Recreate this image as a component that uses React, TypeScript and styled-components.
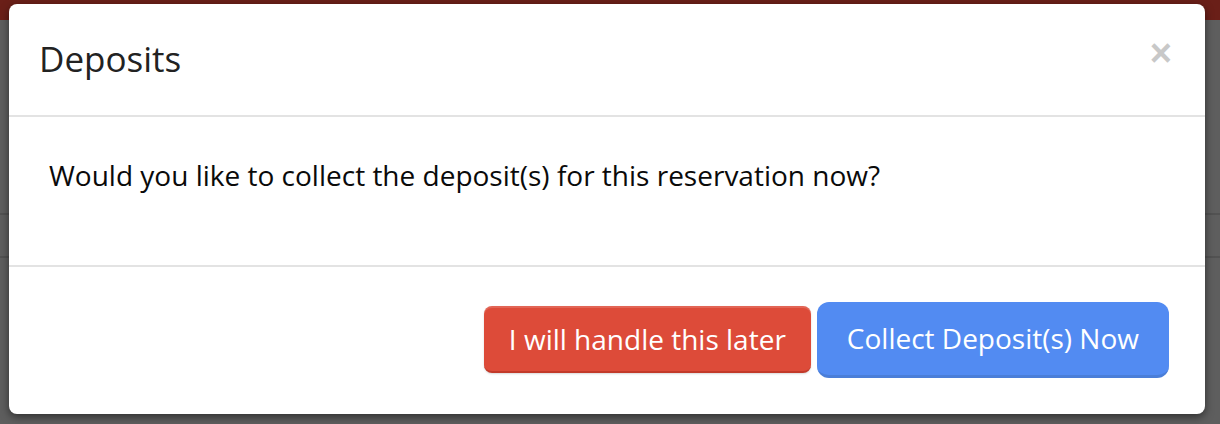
import styled, { createGlobalStyle } from "styled-components";

const GlobalStyle = createGlobalStyle`
  html, body {
    margin: 0;
    padding: 0;
    width: 1220px;
    height: 424px;
    overflow: hidden;
    font-family: "Open Sans", "Liberation Sans", sans-serif;
  }
`;

const App = () => {
  return (
    <>
      <GlobalStyle />
      <Page>
        <TopBar />
        <Backdrop>
          <RowLine $top={213} />
          <RowLine $top={256} />
        </Backdrop>
        <Modal>
          <ModalHeader>
            <h4>Deposits</h4>
            <CloseButton aria-label="Close">×</CloseButton>
          </ModalHeader>
          <ModalBody>
            <p>Would you like to collect the deposit(s) for this reservation now?</p>
          </ModalBody>
          <ModalFooter>
            <Button $variant="danger">I will handle this later</Button>
            <Button $variant="primary">Collect Deposit(s) Now</Button>
          </ModalFooter>
        </Modal>
      </Page>
    </>
  );
};

const Page = styled.div`
  position: relative;
  width: 1220px;
  height: 424px;
  background: #5e5e5e;
  display: flex;
  flex-direction: column;
`;
const TopBar = styled.div`
  height: 20px;
  background: #6a1f18;
`;
const Backdrop = styled.div`
  position: relative;
  flex: 1;
`;
const RowLine = styled.div<{ $top: number }>`
  position: absolute;
  left: 0;
  right: 0;
  top: ${(p) => p.$top - 20}px;
  height: 2px;
  background: #525252;
`;
const Modal = styled.div`
  position: absolute;
  top: 4px;
  left: 9px;
  width: 1196px;
  height: 410px;
  background: #fff;
  border-radius: 8px;
  box-shadow: 0 3px 9px rgba(0, 0, 0, 0.5);
  display: flex;
  flex-direction: column;
  overflow: hidden;
`;
const ModalHeader = styled.div`
  position: relative;
  padding: 31px 30px 32px 30px;
  border-bottom: 2px solid #e3e3e3;
  h4 {
    margin: 0;
    font-size: 35px;
    line-height: 48px;
    font-weight: 400;
    color: #222;
  }
`;
const CloseButton = styled.span`
  position: absolute;
  top: 30px;
  right: 33px;
  font-family: "Liberation Sans", Arial, sans-serif;
  font-size: 38px;
  line-height: 38px;
  font-weight: 700;
  color: #c8c8c8;
`;
const ModalBody = styled.div`
  height: 150px;
  box-sizing: border-box;
  padding: 39px 40px 0 40px;
  border-bottom: 2px solid #e3e3e3;
  p {
    margin: 0;
    font-size: 28px;
    line-height: 38px;
    color: #0a0a0a;
  }
`;
const ModalFooter = styled.div`
  flex: 1;
  display: flex;
  justify-content: flex-end;
  align-items: center;
  gap: 6px;
  padding: 0 36px 2px 0;
`;
const Button = styled.button<{ $variant: "danger" | "primary" }>`
  font-family: "Open Sans", "Liberation Sans", sans-serif;
  font-size: 28px;
  color: #fff;
  border: none;
  cursor: pointer;
  ${(p) =>
    p.$variant === "danger"
      ? `
    background: #dd4b39;
    height: 67px;
    padding: 0 25px;
    border-radius: 8px;
    border-bottom: 2px solid #c23a2a;
    box-shadow: inset 0 2px 0 rgba(255, 255, 255, 0.15), 0 1px 2px rgba(0, 0, 0, 0.15);
  `
      : `
    background: #528bf2;
    height: 76px;
    padding: 0 30px;
    border-radius: 12px;
    border-bottom: 3px solid #4a7ed8;
  `}
`;

export default App;
